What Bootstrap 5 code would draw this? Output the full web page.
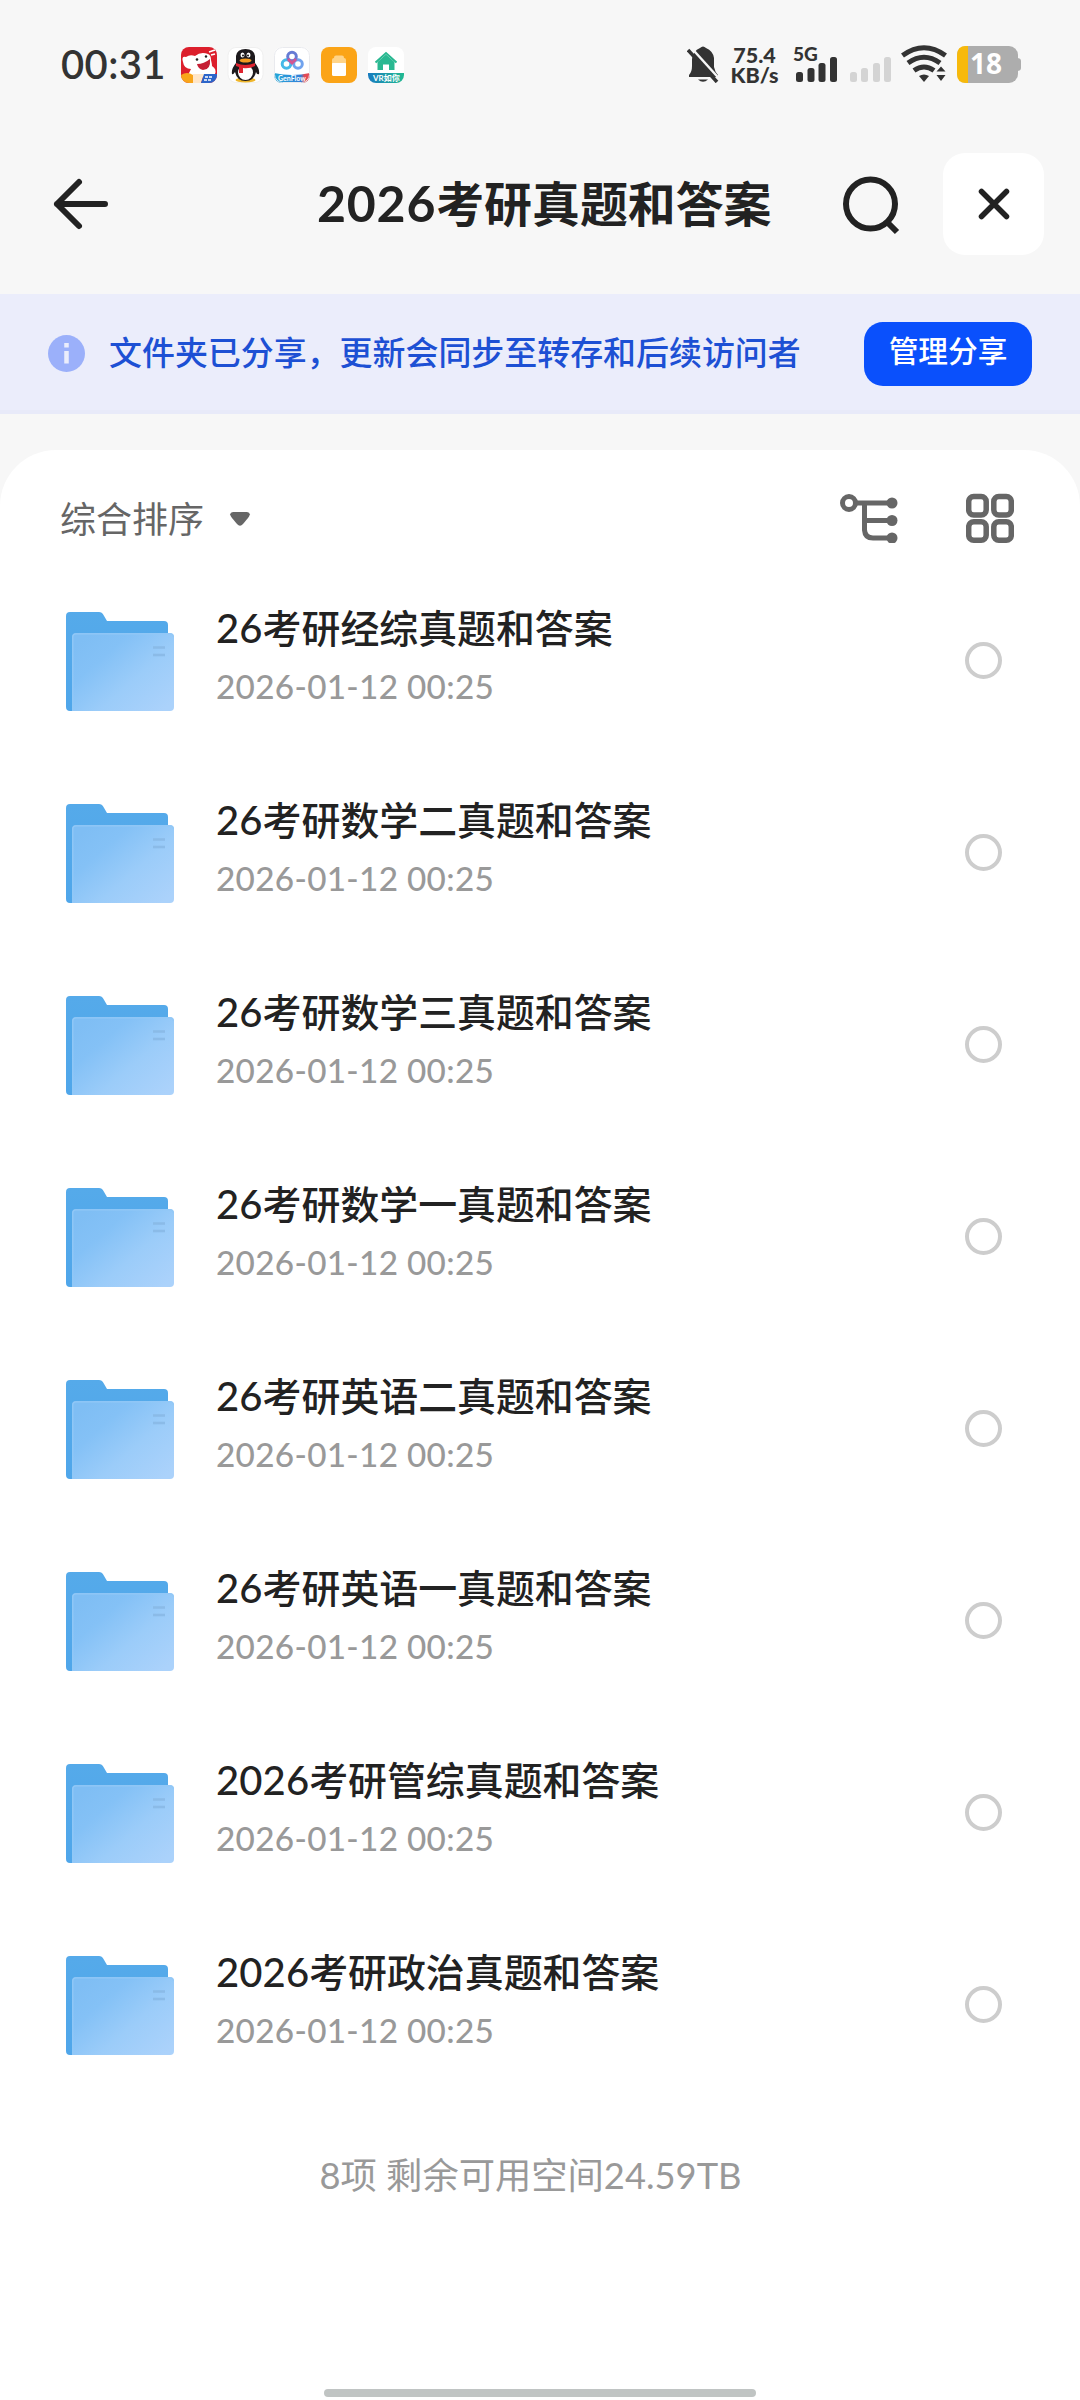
<!DOCTYPE html>
<html lang="zh-CN">
<head>
<meta charset="utf-8">
<meta name="viewport" content="width=device-width, initial-scale=1">
<title>2026考研真题和答案</title>
<link href="https://cdn.jsdelivr.net/npm/bootstrap@5.3.0/dist/css/bootstrap.min.css" rel="stylesheet">
<style>
body{width:1080px;height:2400px;background:#f7f7f7;font-family:Lato,"Noto Sans CJK SC",sans-serif;color:#222;overflow:hidden;line-height:1}
svg{display:block;flex:none}
.statusbar{height:94px;padding:36px 55px 0 61px;color:#333}
.statusbar>div{height:56px}
.clock{font-size:40px;font-weight:600;width:120px;white-space:nowrap;letter-spacing:.4px}
.app-icons{margin-top:11px}
.bell{margin-top:10px}
.rate{width:61px;font:900 21.5px/20px Lato,sans-serif;text-align:center;padding:9px 0 0 8px;white-space:nowrap}
.titlebar{height:200px;padding:59px 36px 0 50px}
.titlebar h1{font-size:47.9px;font-weight:700;margin:20px 0 0 205px;width:454px;white-space:nowrap;line-height:60px}
.titlebar h1 .num{font-size:50px;letter-spacing:.8px}
.titlebar .search{margin-left:69px}
.close-btn{width:102px;height:102px;border-radius:22px;background:#fff;margin:0 0 0 41px}
.notice{height:120px;background:#ebedfb;padding:3px 48px 0;border-bottom:4px solid #e8eaf9;color:#1d50d4}
.notice-text{font-size:32.95px;font-weight:500;margin:-3px 0 0 24px;width:755px;white-space:nowrap;line-height:50px}
.btn-share{width:168px;height:64px;border-radius:19px;background:#0a50fc;color:#fff;font-size:29.7px;font-weight:500;padding:0 0 5px;line-height:50px}
.sheet{margin-top:36px;height:1950px;background:#fff;border-radius:56px 56px 0 0}
.toolbar{height:138px;padding:0 66px 0 60px;color:#666}
.sort{font-size:36px;line-height:50px}
.caret{margin:1px 0 0 25px}
.toolicon{margin-top:-2px}
.gridicon{margin-left:68px}
.files{margin-top:-24px}
.file-row{height:192px;padding:0 78px 0 66px}
.folder{margin-top:2px}
.file-name{font-size:38.9px;font-weight:500;line-height:50px;white-space:nowrap}
.file-name .num{font-size:40px;letter-spacing:.1px}
.file-date{font-size:33.3px;font-weight:500;color:#999;line-height:40px;letter-spacing:.3px;margin-top:13px}
.file-meta{margin:-11px 0 0 42px}
.pick{width:37px;height:37px;border:4px solid #cdcdcd;border-radius:50%}
.summary{font-size:36.3px;color:#999;line-height:50px;white-space:nowrap;margin-top:50px;padding-right:19px}
.home{width:432px;height:8px;border-radius:4px;background:#c0c4c3;margin:auto auto 3px}
</style>
<script src="https://cdn.jsdelivr.net/npm/bootstrap@5.3.0/dist/js/bootstrap.bundle.min.js"></script>
</head>
<body>
<svg width="0" height="0" class="position-absolute">
 <defs>
  <linearGradient id="back" x1="0" y1="0" x2="0" y2="1"><stop offset="0" stop-color="#55aaea"/><stop offset="1" stop-color="#4fa6ea"/></linearGradient>
  <linearGradient id="front" gradientUnits="userSpaceOnUse" x1="20" y1="25" x2="90" y2="105"><stop offset="0" stop-color="#7fbef4"/><stop offset=".25" stop-color="#84c1f6"/><stop offset=".6" stop-color="#9bccf9"/><stop offset="1" stop-color="#abd2fb"/></linearGradient>
  <symbol id="folder" viewBox="0 0 108 99">
   <path d="M4 0H33Q36 0 37.500 3L41 9H98Q102 9 102 13V60H20L6 99H4Q0 99 0 95V4Q0 0 4 0Z" fill="url(#back)"/>
   <path d="M10 21H104Q108 21 108 25V95Q108 99 104 99H6V25Q6 21 10 21Z" fill="url(#front)"/>
   <path d="M6.800 98V25Q6.800 21.800 10 21.800H104Q107.300 21.800 107.300 25" fill="none" stroke="#92c8f6" stroke-width="1.300"/>
   <path d="M87 35.500H99M87 43H99" stroke="#88b8e4" stroke-width="2.500" opacity=".8"/>
  </symbol>
 </defs>
</svg>

<header>
 <div class="statusbar d-flex">
  <div class="d-flex align-items-center clock">00:31</div>
  <svg width="225" height="36" viewBox="0 0 225 36" class="app-icons">
   <defs>
    <clipPath id="r1"><rect width="36" height="36" rx="8"/></clipPath>
    <clipPath id="r3"><rect x="93" width="36" height="36" rx="8"/></clipPath>
    <clipPath id="r5"><rect x="187" width="36" height="36" rx="8"/></clipPath>
    <linearGradient id="gf"><stop offset="0" stop-color="#25a7d8"/><stop offset=".75" stop-color="#327fd8"/><stop offset=".85" stop-color="#e44a55"/></linearGradient>
    <linearGradient id="vr"><stop offset="0" stop-color="#197cc0"/><stop offset="1" stop-color="#20b990"/></linearGradient>
   </defs>
   <g clip-path="url(#r1)">
    <rect width="36" height="36" fill="#dc1f2c"/>
    <path d="M2 15Q0 9 5 10Q9 7 14 9Q20 4 27 7Q30 8 30 13Q31 17 31 19Q36 22 34 27L24 30L7 28L10 22Q3 22 2 15Z" fill="#fff"/>
    <path d="M16 17Q23 17 29 12Q30 23 22 23Q17 22 16 17Z" fill="#c51f35"/><circle cx="16" cy="12.500" r="1.300" fill="#222"/><circle cx="25" cy="9.500" r="1.200" fill="#222"/><path d="M28 5L34 3M30 8L34 7" stroke="#fff" stroke-width="1.500"/>
    <path d="M0 28Q6 24 12 28V36H0Z" fill="#f8a51b"/><path d="M12 27H23L20 36H12Z" fill="#ffe6c8"/><path d="M23 27H36V36H20Z" fill="#2c65ca"/>
    <path d="M24 30H32M23 33H31" stroke="#fff" stroke-width="1.500" stroke-dasharray="3 1"/>
   </g>
   <rect x="47" y=".5" width="35" height="35" rx="8" fill="#fff" stroke="#efefef"/>
   <g>
    <ellipse cx="64.500" cy="33" rx="10" ry="2.500" fill="#efb62b"/>
    <path d="M55 9Q56 2 64.500 2Q73 2 74 9V16Q79 22 78 27Q76 28 75 25Q73 34 64.500 34Q56 34 54 25Q52 28 51 27Q50 22 55 16Z" fill="#1d1a1d"/>
    <ellipse cx="64.500" cy="25.500" rx="7.500" ry="7.500" fill="#fff"/>
    <ellipse cx="61.500" cy="8" rx="2" ry="2.600" fill="#fff"/><ellipse cx="67.500" cy="8" rx="2" ry="2.600" fill="#fff"/><circle cx="62" cy="8.500" r="1" fill="#111"/><circle cx="67" cy="8.500" r="1" fill="#111"/>
    <ellipse cx="64.500" cy="13.500" rx="6" ry="2" fill="#f39b20"/>
    <path d="M55 16Q64 20 74 16V19Q68 22 62 21V26H58V20L55 19Z" fill="#df2430"/>
   </g>
   <g clip-path="url(#r3)">
    <rect x="93" width="36" height="36" fill="#fff"/>
    <path d="M93 26Q111 30 129 26V36H93Z" fill="url(#gf)"/>
    <g fill="none" stroke-width="3"><circle cx="105.500" cy="17" r="4.300" stroke="#45b9e8"/><circle cx="117" cy="17" r="4.300" stroke="#71a3ee"/><circle cx="111" cy="9.500" r="4.300" stroke="#667bd4"/><path d="M107 12L111 16L115 12" stroke="#d45592"/></g>
    <text x="97" y="34" font-family="Lato" font-size="7" font-weight="700" fill="#fff">GenFlow</text>
   </g>
   <rect x="93.500" y=".5" width="35" height="35" rx="8" fill="none" stroke="#e9eaee"/>
   <rect x="140" width="36" height="36" rx="8" fill="#fba417"/><rect x="153" y="8.500" width="10" height="8" rx="2" fill="#ffd489"/><rect x="151" y="15" width="14" height="14" rx="1.500" fill="#fff"/><path d="M151 16V13Q151 11 153 11H163Q165 11 165 13V16Z" fill="#ffd489"/>
   <g clip-path="url(#r5)"><rect x="187" width="36" height="36" fill="#fff"/><path d="M187 26H223V36H187Z" fill="url(#vr)"/>
    <path d="M196.500 15L205 7.500L213.500 15V23H208V17.500H202V23H196.500Z" fill="#29b891"/><path d="M194.500 15.500L205 6L215.500 15.500" fill="none" stroke="#29b891" stroke-width="2"/>
    <text x="192" y="34" font-family="Lato,Noto Sans CJK SC" font-size="8" font-weight="700" fill="#fff">VR如你</text></g>
  </svg>
  <div class="ms-auto d-flex">
   <svg width="33" height="37" viewBox="0 0 33 37" class="bell">
    <path d="M2 31V29Q5 26 5 20V13Q6 5 13 2Q16 -1 19 2Q26 5 27 12V21Q28 26 31 29V31Z" fill="#333"/><path d="M11 33.500H21Q16 38 11 33.500Z" fill="#333"/>
    <path d="M4 1.500L33 33.500" stroke="#f7f7f7" stroke-width="2.500"/><path d="M1 4L30 36" stroke="#333" stroke-width="3.500"/>
   </svg>
   <div class="rate">75.4<br>KB/s</div>
   <svg width="244" height="56" viewBox="0 0 244 56" fill="#333">
    <text x="12" y="25" font-family="Lato" font-size="19" font-weight="900">5G</text>
    <g><rect x="15" y="36" width="7" height="10" rx="2.500"/><rect x="26.500" y="32" width="7" height="14" rx="2.500"/><rect x="37.500" y="27" width="7" height="19" rx="2.500"/><rect x="49" y="21" width="7" height="25" rx="2.500"/></g>
    <g fill="#d4d4d4"><rect x="69" y="36" width="7" height="10" rx="2.500"/><rect x="80" y="32" width="7" height="14" rx="2.500"/><rect x="92" y="27" width="7" height="19" rx="2.500"/><rect x="103" y="21" width="7" height="25" rx="2.500"/></g>
    <g fill="none" stroke="#333" stroke-width="5"><path d="M121.500 19.500Q143 4 164.500 19.500"/><path d="M127 27Q143 15.500 159 27"/><path d="M133 34.500Q143 27.500 153 34.500"/></g>
    <path d="M138 40Q143 37 148 40L143 46Z"/><path d="M155.500 35.500L160 30.500L164.500 35.500ZM155.500 39L160 45L164.500 39Z"/>
    <rect x="176" y="10" width="61" height="37" rx="9" fill="#adadad"/><path d="M236 22Q240 22 240 25V32Q240 35 236 35Z" fill="#adadad"/><path d="M187 10H185Q176 10 176 19V38Q176 47 185 47H187Z" fill="#f7b90b"/>
    <text x="205" y="38" text-anchor="middle" font-family="Open Sans" font-size="28" font-weight="700" fill="#fff">18</text>
   </svg>
  </div>
 </div>
 <div class="titlebar d-flex align-items-start">
  <svg width="62" height="102" viewBox="0 -20 62 102" fill="none" stroke="#222" stroke-width="6" stroke-linecap="round" stroke-linejoin="round"><path d="M29 9L7 31L29 53M7 31H55"/></svg>
  <h1><span class="num">2026</span>考研真题和答案</h1>
  <svg width="62" height="102" viewBox="0 -20 62 102" fill="none" stroke="#222" stroke-width="6" class="search"><circle cx="30.500" cy="31" r="24.500"/><path d="M47 49L57 59"/></svg>
  <div class="close-btn d-flex align-items-center justify-content-center"><svg width="34" height="34" viewBox="0 0 34 34" stroke="#222" stroke-width="5.500" stroke-linecap="round"><path d="M4.500 4.500L29.500 29.500M29.500 4.500L4.500 29.500"/></svg></div>
 </div>
</header>

<div class="notice d-flex align-items-center">
 <svg width="37" height="37" viewBox="0 0 37 37"><circle cx="18.500" cy="18.500" r="18.500" fill="#9bb0fa"/><path d="M18.500 8V12.500M18.500 16V28.500" stroke="#ebedfb" stroke-width="4.500"/></svg>
 <span class="notice-text">文件夹已分享，更新会同步至转存和后续访问者</span>
 <button class="btn btn-share border-0">管理分享</button>
</div>

<main class="sheet d-flex flex-column">
 <div class="toolbar d-flex align-items-center">
  <span class="sort">综合排序</span>
  <svg width="22" height="15" viewBox="0 0 22 15" fill="#666" class="caret"><path d="M4 0H18Q23 1 19 6L14 12Q11 15.500 8 12L3 6Q-1 1 4 0Z"/></svg>
  <svg width="58" height="50" viewBox="0 0 58 50" fill="none" stroke="#666" stroke-width="5" class="ms-auto toolicon"><circle cx="9" cy="10" r="6.500"/><path d="M16 10H52M24.500 10V37Q25 45 33 45H52M24.500 27.500H52"/><g fill="#666" stroke="none"><circle cx="52" cy="10" r="5.500"/><circle cx="52" cy="27.500" r="5.500"/><circle cx="52" cy="45" r="5.500"/></g></svg>
  <svg width="48" height="50" viewBox="0 0 48 50" fill="none" stroke="#666" stroke-width="5.500" class="toolicon gridicon"><rect x="2.700" y="3.500" width="17.500" height="18.500" rx="5"/><rect x="27.800" y="3.500" width="17.500" height="18.500" rx="5"/><rect x="2.700" y="28.700" width="17.500" height="18.500" rx="5"/><rect x="27.800" y="28.700" width="17.500" height="18.500" rx="5"/></svg>
 </div>
 <div id="files" class="files"></div>
 <div class="summary text-center">8项 剩余可用空间24.59TB</div>
 <div class="home"></div>
</main>
<script>
const files=[["26","考研经综真题和答案"],["26","考研数学二真题和答案"],["26","考研数学三真题和答案"],["26","考研数学一真题和答案"],["26","考研英语二真题和答案"],["26","考研英语一真题和答案"],["2026","考研管综真题和答案"],["2026","考研政治真题和答案"]];
document.getElementById("files").innerHTML=files.map(([n,t])=>`<div class="file-row d-flex align-items-center"><svg class="folder" width="108" height="99"><use href="#folder"/></svg><div class="file-meta"><div class="file-name"><span class="num">${n}</span>${t}</div><div class="file-date">2026-01-12 00:25</div></div><span class="pick ms-auto"></span></div>`).join("");
</script>
</body>
</html>
